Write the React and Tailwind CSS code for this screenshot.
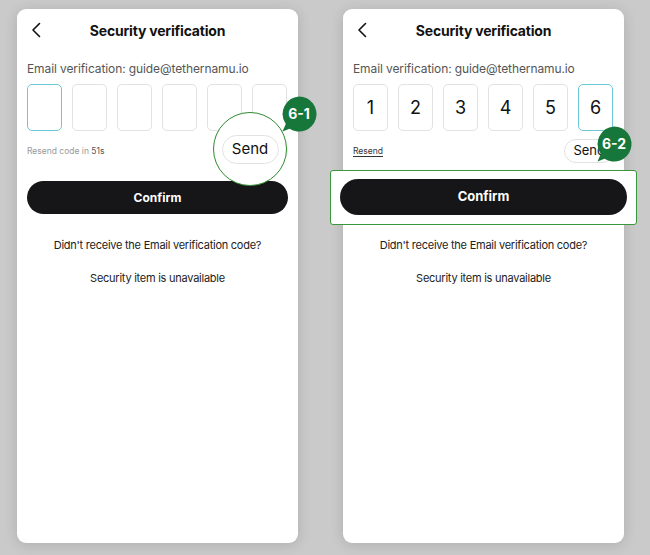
const font = { fontFamily: "Inter, 'Noto Sans', sans-serif" }

function Badge({ label, className }) {
  return (
    <div className={"absolute w-[36px] h-[36px] " + className}>
      <svg className="absolute inset-0" width="36" height="36" viewBox="0 0 36 36">
        <path d="M18 0.5a17.5 17.5 0 1 1-9.5 32.2L1.5 35.5l3.3-7.6A17.5 17.5 0 0 1 18 0.5z" fill="#17763a" />
      </svg>
      <div className="relative flex h-full items-center justify-center pb-[1px] text-[14px] font-bold text-white">
        {label}
      </div>
    </div>
  )
}

function Header() {
  return (
    <div className="grid h-[42px] grid-cols-[40px_1fr_40px] items-center">
      <svg width="12" height="16" viewBox="0 0 12 16" className="ml-[4px]">
        <path d="M8.5 1.5L2 8l6.5 6.5" fill="none" stroke="#111" strokeWidth="1.6" strokeLinecap="round" strokeLinejoin="round" />
      </svg>
      <h1 className="text-center text-[14px] font-bold tracking-[-0.2px] text-[#111]">Security verification</h1>
      <div />
    </div>
  )
}

function CodeBoxes({ digits, active }) {
  return (
    <div className="mt-[7px] flex gap-[10px]">
      {[0, 1, 2, 3, 4, 5].map((i) => (
        <div
          key={i}
          className={
            "flex h-[47px] w-[35px] items-center justify-center rounded-[5px] border text-[18px] text-[#111] " +
            (i === active ? "border-[#6cc7d6]" : "border-[#e2e2e2]")
          }
        >
          {digits ? digits[i] : ""}
        </div>
      ))}
    </div>
  )
}

function Card({ children, resend }) {
  return (
    <div className="relative h-[534px] w-[281px] rounded-[9px] bg-white px-[10px] shadow-[0_2px_14px_rgba(0,0,0,0.14)]">
      <Header />
      <p className="mt-[10px] text-[12px] leading-[16px] tracking-[-0.1px] text-[#555]">Email verification: guide@tethernamu.io</p>
      {children}
      <div className="mt-[8px] flex h-[24px] items-center justify-between">
        {resend}
        <button className="h-[24px] rounded-full border border-[#e2e2e2] px-[8px] text-[13px] text-[#111]">Send</button>
      </div>
      <button className="mt-[18px] h-[33px] w-full rounded-full bg-[#161618] text-[12px] font-bold text-white">Confirm</button>
      <p className="mt-[23px] text-center text-[11px] leading-[16px] tracking-[-0.25px] text-[#222]">Didn't receive the Email verification code?</p>
      <p className="mt-[17px] text-center text-[11px] leading-[16px] tracking-[-0.25px] text-[#222]">Security item is unavailable</p>
    </div>
  )
}

export default function App() {
  return (
    <div className="flex h-[555px] w-[650px] gap-[45px] bg-[#cacaca] pl-[17px] pt-[9px]" style={font}>
      <Card resend={<span className="text-[8.5px] text-[#999]">Resend code in <span className="text-[#555]">51s</span></span>}>
        <CodeBoxes active={0} />
        <div className="absolute left-[196px] top-[103px] flex h-[74px] w-[74px] items-center justify-center rounded-full border-[1.5px] border-[#2e8b2e] bg-white">
          <span className="flex h-[29px] w-[57px] items-center justify-center rounded-full border border-[#e2e2e2] text-[15px] text-[#111]">Send</span>
        </div>
        <Badge label="6-1" className="left-[264px] top-[87px]" />
      </Card>

      <Card resend={<span className="text-[8.5px] text-[#333] underline underline-offset-2">Resend</span>}>
        <CodeBoxes active={5} digits={["1", "2", "3", "4", "5", "6"]} />
        <div className="absolute left-[-13px] top-[161px] h-[55px] w-[307px] rounded-[3px] border-[1.5px] border-[#3a963a] bg-white px-[9px] pt-[8px]">
          <div className="flex h-[36px] w-full items-center justify-center rounded-full bg-[#161618] text-[13px] font-bold text-white">Confirm</div>
        </div>
        <Badge label="6-2" className="left-[253px] top-[117px]" />
      </Card>
    </div>
  )
}
